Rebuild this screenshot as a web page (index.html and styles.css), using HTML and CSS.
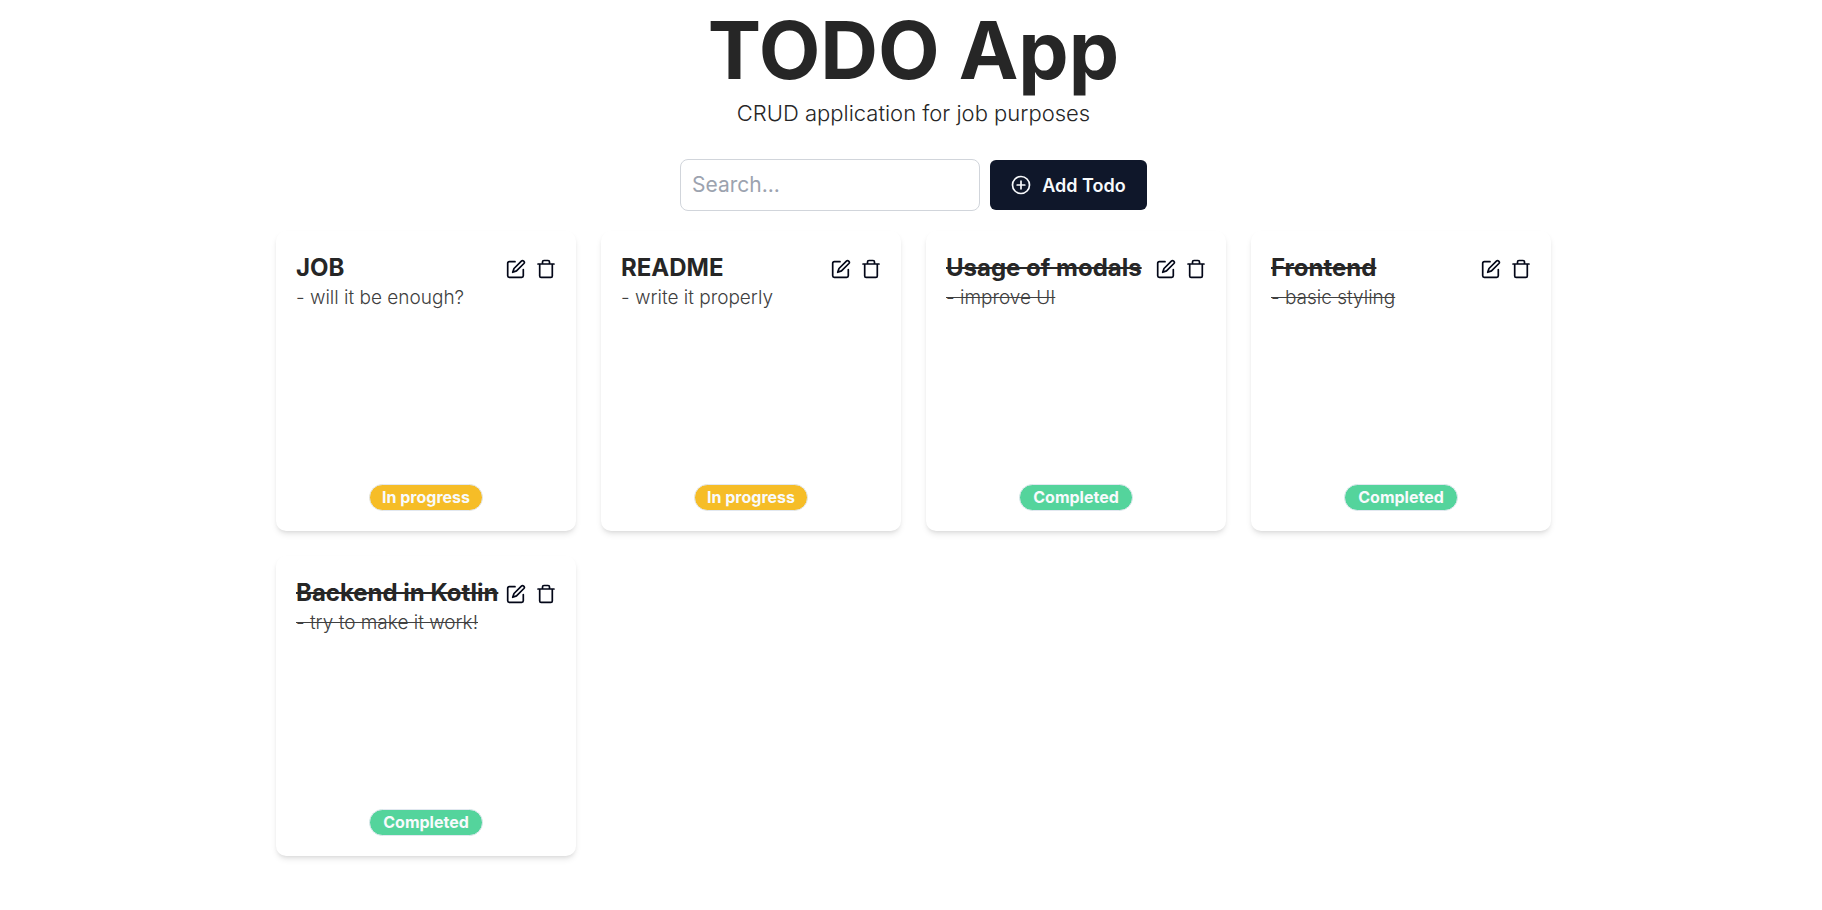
FILE: index.html
```html
<!DOCTYPE html>
<html lang="en">
<head>
<meta charset="utf-8">
<meta name="viewport" content="width=device-width, initial-scale=1">
<title>TODO App</title>
<link rel="stylesheet" href="styles.css">
</head>
<body>
<svg class="sprite" aria-hidden="true">
  <symbol id="edit" viewBox="0 0 20 20"><path d="M9 2.7H3.3Q1.7 2.7 1.7 4.300V16.700Q1.700 18.300 3.300 18.300H15.700Q17.300 18.300 17.300 16.700V10.500M15.400 2.100Q16.500 1 17.700 2.100Q19 3.300 17.900 4.500L10.500 11.900L6.700 13.300L8 9.500Z"/></symbol>
  <symbol id="trash" viewBox="0 0 20 20"><path d="M2 5H18M3.700 5V16.900Q3.700 18.300 5.100 18.300H14.900Q16.300 18.300 16.300 16.900V5M6.500 5V3Q6.500 1.500 8 1.500H12Q13.500 1.500 13.500 3V5"/></symbol>
</svg>
<main class="page">
  <header class="header">
    <h1 class="title">TODO App</h1>
    <p class="subtitle">CRUD application for job purposes</p>
  </header>
  <div class="toolbar">
    <input class="search" type="text" placeholder="Search..." aria-label="Search">
    <button class="add" type="button">
      <svg class="icon" viewBox="0 0 20 20" aria-hidden="true"><circle cx="10" cy="10" r="8.500"/><path d="M10 6.200V13.800M6.200 10H13.800"/></svg>
      Add Todo
    </button>
  </div>
  <section class="cards" aria-label="Todos">
    <article class="card">
      <div class="card-head"><h2 class="card-title">JOB</h2><div class="actions"><button class="action" type="button" aria-label="Edit JOB"><svg class="icon"><use href="#edit"/></svg></button><button class="action" type="button" aria-label="Delete JOB"><svg class="icon"><use href="#trash"/></svg></button></div></div>
      <p class="text">- will it be enough?</p>
      <span class="badge progress">In progress</span>
    </article>
    <article class="card">
      <div class="card-head"><h2 class="card-title">README</h2><div class="actions"><button class="action" type="button" aria-label="Edit README"><svg class="icon"><use href="#edit"/></svg></button><button class="action" type="button" aria-label="Delete README"><svg class="icon"><use href="#trash"/></svg></button></div></div>
      <p class="text">- write it properly</p>
      <span class="badge progress">In progress</span>
    </article>
    <article class="card done">
      <div class="card-head"><h2 class="card-title">Usage of modals</h2><div class="actions"><button class="action" type="button" aria-label="Edit Usage of modals"><svg class="icon"><use href="#edit"/></svg></button><button class="action" type="button" aria-label="Delete Usage of modals"><svg class="icon"><use href="#trash"/></svg></button></div></div>
      <p class="text">- improve UI</p>
      <span class="badge completed">Completed</span>
    </article>
    <article class="card done">
      <div class="card-head"><h2 class="card-title">Frontend</h2><div class="actions"><button class="action" type="button" aria-label="Edit Frontend"><svg class="icon"><use href="#edit"/></svg></button><button class="action" type="button" aria-label="Delete Frontend"><svg class="icon"><use href="#trash"/></svg></button></div></div>
      <p class="text">- basic styling</p>
      <span class="badge completed">Completed</span>
    </article>
    <article class="card done">
      <div class="card-head"><h2 class="card-title">Backend in Kotlin</h2><div class="actions"><button class="action" type="button" aria-label="Edit Backend in Kotlin"><svg class="icon"><use href="#edit"/></svg></button><button class="action" type="button" aria-label="Delete Backend in Kotlin"><svg class="icon"><use href="#trash"/></svg></button></div></div>
      <p class="text">- try to make it work!</p>
      <span class="badge completed">Completed</span>
    </article>
  </section>
</main>
</body>
</html>
```
FILE: styles.css
```css
* { box-sizing: border-box; }
body { margin: 0; background: #fff; color: #262626; font-family: Inter, "Open Sans", sans-serif; }
h1, h2, p { margin: 0; }
button, input { font: inherit; }
.sprite { display: none; }
.page { display: flex; flex-direction: column; align-items: center; padding: 10px 0 10px 5px; }
.header { text-align: center; }
.title { font-size: 80px; line-height: 80px; font-weight: 700; }
.subtitle { margin-top: 8px; font-size: 22px; line-height: 30px; font-weight: 300; }
.toolbar { display: flex; align-items: center; justify-content: center; gap: 10px; margin: 31px 0 20px; }
.search { width: 300px; height: 52px; padding: 0 11px 2px; border: 1px solid #d1d5db; border-radius: 8px; background: #fff; color: #262626; font-size: 21px; }
.search::placeholder { color: #9ca3af; opacity: 1; }
.add { display: flex; align-items: center; justify-content: center; gap: 11px; height: 50px; padding: 0 20px; border: 0; border-radius: 6px; background: #0f172a; color: #f8fafc; font-size: 18px; font-weight: 600; min-width: 157px; white-space: nowrap; }
.icon { display: block; flex: none; width: 20px; height: 20px; fill: none; stroke: currentColor; stroke-width: 1.7; stroke-linecap: round; stroke-linejoin: round; }
.cards { display: grid; grid-template-columns: repeat(auto-fill, 300px); justify-content: center; gap: 25px; width: 100%; max-width: 1300px; }
.card { display: flex; flex-direction: column; min-height: 300px; padding: 20px; border-radius: 10px; background: #fff; box-shadow: 0 4px 6px -1px rgb(0 0 0 / 10%), 0 2px 4px -2px rgb(0 0 0 / 10%); }
.card-head { display: flex; align-items: center; justify-content: space-between; height: 36px; }
.card-title { padding-bottom: 2px; font-size: 24px; line-height: 32px; font-weight: 700; white-space: nowrap; }
.actions { display: flex; gap: 10px; }
.action { padding: 0; border: 0; background: none; color: #020617; }
.text { color: #404040; font-size: 19px; line-height: 22px; font-weight: 300; }
.done .card-title, .done .text { text-decoration: line-through; }
.badge { align-self: center; margin-top: auto; min-width: 114px; padding: 2px 10px 3px; border: 1px solid #e2e8f0; border-radius: 999px; color: #f8fafc; font-size: 16px; line-height: 20px; font-weight: 700; text-align: center; }
.progress { background: #f6bd27; }
.completed { background: #54d49c; }
```
